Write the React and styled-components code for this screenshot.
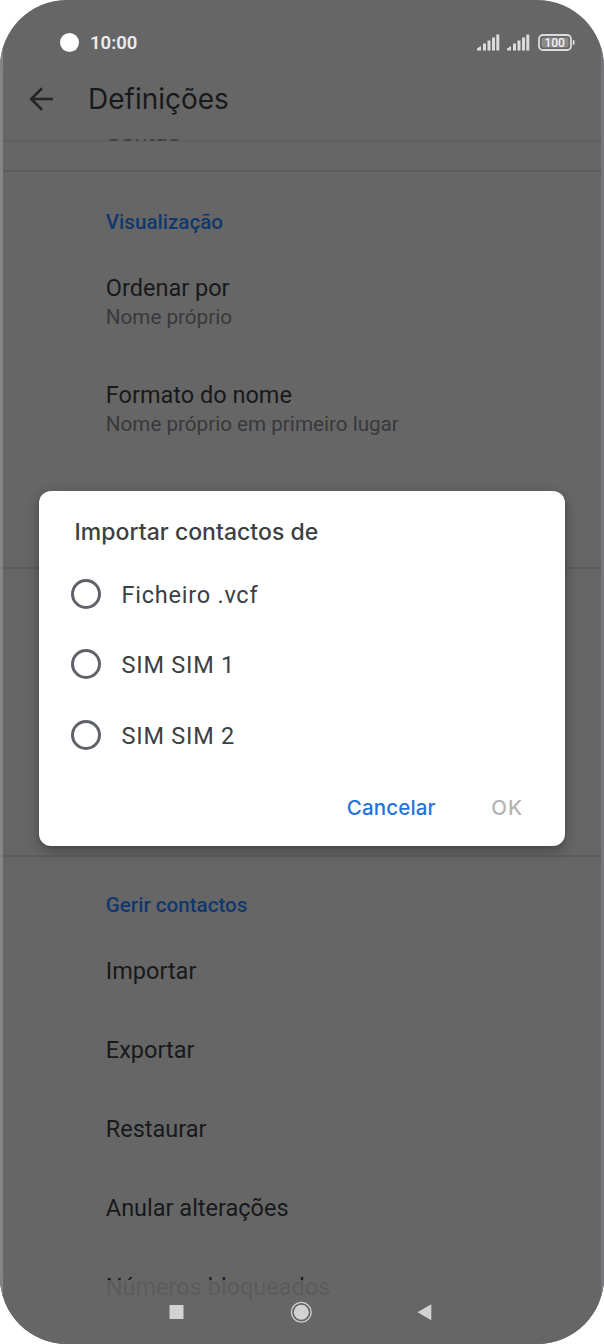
import styled, { createGlobalStyle } from 'styled-components';

const GlobalStyle = createGlobalStyle`
  * {
    box-sizing: border-box;
  }
  body {
    margin: 0;
    background: white;
  }
`;

const Phone = styled.div`
  position: relative;
  display: flex;
  flex-direction: column;
  width: 604px;
  height: 1344px;
  background-color: #666666;
  border-radius: 67px;
  overflow: hidden;
  font-family: Roboto, sans-serif;
  color: #18191b;
`;

const Edge = styled.div`
  position: absolute;
  top: 45px;
  bottom: 48px;
  width: 3px;
  ${p => p.$side}: 0;
  background-color: ${p => p.$color};
`;

const StatusBar = styled.header`
  display: flex;
  align-items: center;
  height: 57px;
  padding: 28px 29px 0 60px;
  color: #ececec;
`;

const Camera = styled.span`
  width: 19px;
  height: 19px;
  border-radius: 50%;
  background-color: white;
`;

const Clock = styled.span`
  flex: 1;
  margin-left: 11px;
  padding-top: 1px;
  font-size: 18.5px;
  font-weight: 600;
`;

const StatusIcons = styled.div`
  display: flex;
  align-items: center;
  gap: 7px;

  svg {
    display: block;
  }
  >svg:last-child {
    margin-left: 1px;
  }
`;

const AppBar = styled.div`
  display: flex;
  align-items: center;
  height: 82px;
  padding: 1px 0 0 28px;

  >h1{
    margin: 0 0 0 33px;
    font-family: Inter, sans-serif;
    font-size: 28px;
    font-weight: 400;
  }
`;

const Scroll = styled.main`
  height: 1205px;
  overflow: hidden;
  background: linear-gradient(#5e5e5e, #616161) 0 1px / 100% 2px no-repeat;
`;

const Section = styled.section`
  height: ${p => p.$height}px;
  padding-left: 105.8px;
  border-bottom: 2px solid #5d5d5d;
  overflow: hidden;

  &:last-child {
    border-bottom: none;
  }
`;

const Peek = styled.div`
  margin-top: -18px;
  font-size: 23.5px;
  line-height: 24px;
  color: #404041;
`;

const SectionTitle = styled.h2`
  margin: 0;
  padding-top: ${p => p.$top}px;
  font-size: 20.6px;
  line-height: 26px;
  font-weight: 500;
  color: #10386c;
`;

const Entry = styled.div`
  padding-top: ${p => p.$top}px;
  font-size: 23.5px;
  line-height: 30px;

  >p{
    margin: 0;
    font-size: 20.65px;
    line-height: 29px;
    color: #38393c;
  }
`;

const Action = styled.div`
  height: 79px;
  font-size: 23.5px;
  line-height: 30px;
`;

const NavBar = styled.nav`
  position: absolute;
  left: 0;
  right: 0;
  bottom: 0;
  height: 64px;
  background-color: rgba(102, 102, 102, 0.86);

  svg {
    display: block;
  }
`;

const Dialog = styled.div`
  position: absolute;
  top: 491px;
  left: 39px;
  width: 526px;
  height: 355px;
  padding: 26px 32px 0;
  border-radius: 12px;
  background-color: white;
  box-shadow: 0 5px 14px rgba(0, 0, 0, 0.3), 0 1px 3px rgba(0, 0, 0, 0.12);
  color: #3c4043;

  >h3{
    margin: 0 0 26px 3.5px;
    font-family: Inter, sans-serif;
    font-size: 23px;
    line-height: 30px;
    font-weight: 450;
    letter-spacing: 0.03px;
  }
`;

const Option = styled.label`
  display: flex;
  align-items: center;
  gap: 20.6px;
  height: 41px;
  margin-bottom: 29.5px;
  font-size: 23.5px;
  letter-spacing: 0.75px;

  >span:last-child{
    padding-top: 2px;
  }
`;

const Radio = styled.span`
  width: 30px;
  height: 30px;
  border: 3px solid #5f6368;
  border-radius: 50%;
`;

const Buttons = styled.div`
  display: flex;
  justify-content: flex-end;
  gap: 55.5px;
  padding: 10px 10px 0 0;
`;

const DialogButton = styled.button`
  padding: 0;
  border: none;
  background: none;
  font-family: Inter, sans-serif;
  font-size: 20.5px;
  line-height: 26px;
  font-weight: ${p => (p.disabled ? 450 : 500)};
  letter-spacing: ${p => (p.disabled ? 1 : 0.15)}px;
  color: ${p => (p.disabled ? '#b4b4b4' : '#1f73dc')};
`;

const Signal = () => (
  <svg width="23" height="17" viewBox="0 0 23 17" fill="#dcdcdc">
    <path d="M0 16.5v-2l4-2.5v4.5z" />
    <rect x="6" y="9.5" width="3" height="7" />
    <rect x="10.5" y="6.5" width="3" height="10" />
    <rect x="15" y="3.5" width="3" height="13" />
    <rect x="19.3" y="0.5" width="3" height="16" />
  </svg>
);

const Battery = () => (
  <svg width="37" height="17" viewBox="0 0 37 17">
    <rect x="1" y="1" width="32" height="15" rx="4" fill="none" stroke="#dcdcdc" strokeWidth="1.8" />
    <rect x="3.5" y="3.5" width="27" height="10" rx="2" fill="#8a8a8a" />
    <path d="M34.8 6h0.7q1 0 1 1v3q0 1-1 1h-0.7z" fill="#dcdcdc" />
    <text x="16.7" y="12.8" textAnchor="middle" fontFamily="Roboto" fontSize="12" fontWeight="500" fill="#f2f2f2">100</text>
  </svg>
);

const actions = ['Importar', 'Exportar', 'Restaurar', 'Anular alterações', 'Números bloqueados'];
const sources = ['Ficheiro .vcf', 'SIM SIM 1', 'SIM SIM 2'];

const App = () => {
  return (
    <>
      <GlobalStyle />
      <Phone>
        <StatusBar>
          <Camera />
          <Clock>10:00</Clock>
          <StatusIcons>
            <Signal />
            <Signal />
            <Battery />
          </StatusIcons>
        </StatusBar>
        <AppBar>
          <svg width="27" height="26" viewBox="0 0 27 26" fill="none" stroke="#242527" strokeWidth="2.7">
            <path d="M25 13H3.500M14 2.200L3.200 13L14 23.800" />
          </svg>
          <h1>Definições</h1>
        </AppBar>
        <Scroll>
          <Section $height={33}>
            <Peek>Contas</Peek>
          </Section>
          <Section $height={397}>
            <SectionTitle $top={37}>Visualização</SectionTitle>
            <Entry $top={38}>
              Ordenar por
              <p>Nome próprio</p>
            </Entry>
            <Entry $top={47.5}>
              Formato do nome
              <p>Nome próprio em primeiro lugar</p>
            </Entry>
          </Section>
          <Section $height={288} />
          <Section $height={487}>
            <SectionTitle $top={35}>Gerir contactos</SectionTitle>
            <Entry $top={38}>
              {actions.map(action => <Action key={action}>{action}</Action>)}
            </Entry>
          </Section>
        </Scroll>
        <NavBar>
          <svg width="604" height="64" viewBox="0 0 604 64" fill="#d2d2d2">
            <rect x="169.500" y="25" width="14" height="14" />
            <circle cx="301.300" cy="32.300" r="9.900" fill="none" stroke="#d2d2d2" strokeWidth="1.300" />
            <circle cx="301.300" cy="32.300" r="7.500" />
            <path d="M417.500 32.300L431.300 24.300V40.300z" />
          </svg>
        </NavBar>
        <Edge $side="left" $color="#858585" />
        <Edge $side="right" $color="#77767a" />
        <Dialog>
          <h3>Importar contactos de</h3>
          {sources.map(source => (
            <Option key={source}>
              <Radio />
              <span>{source}</span>
            </Option>
          ))}
          <Buttons>
            <DialogButton>Cancelar</DialogButton>
            <DialogButton disabled>OK</DialogButton>
          </Buttons>
        </Dialog>
      </Phone>
    </>
  );
};

export default App;
